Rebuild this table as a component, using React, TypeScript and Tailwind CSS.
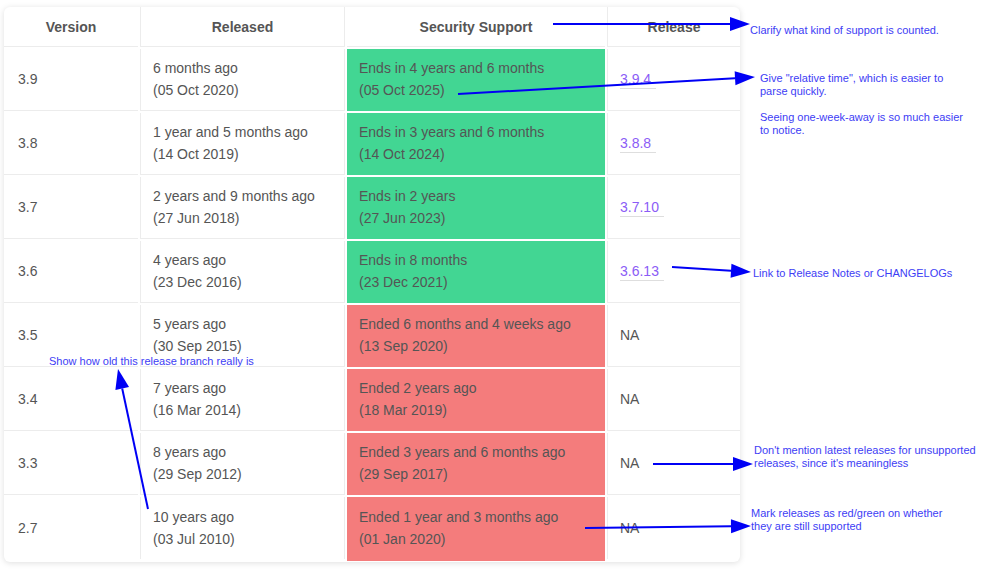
type Row = {
  version: string;
  ago: string;
  date: string;
  support: string;
  supportDate: string;
  ok: boolean;
  release: string | null;
};

const rows: Row[] = [
  { version: "3.9", ago: "6 months ago", date: "(05 Oct 2020)", support: "Ends in 4 years and 6 months", supportDate: "(05 Oct 2025)", ok: true, release: "3.9.4" },
  { version: "3.8", ago: "1 year and 5 months ago", date: "(14 Oct 2019)", support: "Ends in 3 years and 6 months", supportDate: "(14 Oct 2024)", ok: true, release: "3.8.8" },
  { version: "3.7", ago: "2 years and 9 months ago", date: "(27 Jun 2018)", support: "Ends in 2 years", supportDate: "(27 Jun 2023)", ok: true, release: "3.7.10" },
  { version: "3.6", ago: "4 years ago", date: "(23 Dec 2016)", support: "Ends in 8 months", supportDate: "(23 Dec 2021)", ok: true, release: "3.6.13" },
  { version: "3.5", ago: "5 years ago", date: "(30 Sep 2015)", support: "Ended 6 months and 4 weeks ago", supportDate: "(13 Sep 2020)", ok: false, release: null },
  { version: "3.4", ago: "7 years ago", date: "(16 Mar 2014)", support: "Ended 2 years ago", supportDate: "(18 Mar 2019)", ok: false, release: null },
  { version: "3.3", ago: "8 years ago", date: "(29 Sep 2012)", support: "Ended 3 years and 6 months ago", supportDate: "(29 Sep 2017)", ok: false, release: null },
  { version: "2.7", ago: "10 years ago", date: "(03 Jul 2010)", support: "Ended 1 year and 3 months ago", supportDate: "(01 Jan 2020)", ok: false, release: null },
];

// arrows drawn over the screenshot: [x1, y1, x2, y2]
const arrows: [number, number, number, number][] = [
  [553, 24, 750, 24],
  [458, 94, 755, 77],
  [672, 267, 751, 272],
  [653, 464, 753, 464],
  [585, 528, 751, 526],
  [148, 509, 118, 369],
];

function Arrow({ a }: { a: [number, number, number, number] }) {
  const [x1, y1, x2, y2] = a;
  const len = Math.hypot(x2 - x1, y2 - y1);
  const ux = (x2 - x1) / len;
  const uy = (y2 - y1) / len;
  const hl = 20;
  const hw = 7;
  const bx = x2 - ux * hl;
  const by = y2 - uy * hl;
  const pts = `${x2},${y2} ${bx - uy * hw},${by + ux * hw} ${bx + uy * hw},${by - ux * hw}`;
  return (
    <g>
      <line x1={x1} y1={y1} x2={bx} y2={by} stroke="#0000f5" strokeWidth={2} />
      <polygon points={pts} fill="#0000f5" />
    </g>
  );
}

const Note = ({ className, children }: { className: string; children: React.ReactNode }) => (
  <div className={`absolute text-[11px] leading-[13px] text-[#3d3df5] whitespace-nowrap ${className}`}>{children}</div>
);

export default function App() {
  return (
    <div className="relative w-[995px] h-[578px] bg-white font-['Liberation_Sans',Arial,sans-serif] text-[14px] text-[#555]">
      <div className="pt-[7px] pl-[4px]">
        <div className="w-[736px] rounded-md bg-white pb-[3px] shadow-[0_1px_6px_rgba(0,0,0,0.13)] overflow-hidden">
          <div className="grid grid-cols-[134px_205px_258px_133px] auto-rows-[62px] grid-rows-[40px] gap-[2px]">
            <div className="flex items-center justify-center pt-[2px] font-bold border-b border-[#ececec]">Version</div>
            <div className="flex items-center justify-center pt-[2px] font-bold border-b border-x border-[#ececec]">Released</div>
            <div className="flex items-center justify-center pt-[2px] font-bold border-b border-[#ececec]">Security Support</div>
            <div className="flex items-center justify-center pt-[2px] font-bold border-b border-l border-[#ececec]">Release</div>

            {rows.map((r, i) => {
              const last = i === rows.length - 1;
              const bb = last ? "" : "border-b";
              return [
                <div key={r.version + "v"} className={`flex items-center pl-[14px] border-[#ececec] ${bb}`}>{r.version}</div>,
                <div key={r.version + "r"} className={`flex flex-col justify-center pl-[12px] pb-[1px] leading-[22px] border-x border-[#ececec] ${bb}`}>
                  <span>{r.ago}</span>
                  <span>{r.date}</span>
                </div>,
                <div
                  key={r.version + "s"}
                  className={`flex flex-col justify-center pl-[12px] pb-[2px] leading-[22px] ${r.ok ? "bg-[#42d693]" : "bg-[#f47c7c]"} ${last ? "mb-[-2px]" : ""}`}
                >
                  <span>{r.support}</span>
                  <span>{r.supportDate}</span>
                </div>,
                <div key={r.version + "l"} className={`flex items-center pl-[12px] border-l border-[#ececec] ${bb}`}>
                  {r.release ? (
                    <span className="text-[#8b5cf6] border-b border-[#dedede] pr-[5px] leading-[17px]">{r.release}</span>
                  ) : (
                    <span>NA</span>
                  )}
                </div>,
              ];
            })}
          </div>
        </div>
      </div>

      <Note className="left-[750px] top-[24px]">Clarify what kind of support is counted.</Note>
      <Note className="left-[760px] top-[72px]">
        Give "relative time", which is easier to
        <br />
        parse quickly.
        <br />
        <br />
        Seeing one-week-away is so much easier
        <br />
        to notice.
      </Note>
      <Note className="left-[753px] top-[267px]">Link to Release Notes or CHANGELOGs</Note>
      <Note className="left-[49px] top-[355px]">Show how old this release branch really is</Note>
      <Note className="left-[754px] top-[444px]">
        Don't mention latest releases for unsupported
        <br />
        releases, since it's meaningless
      </Note>
      <Note className="left-[751px] top-[507px]">
        Mark releases as red/green on whether
        <br />
        they are still supported
      </Note>

      <svg className="absolute inset-0 pointer-events-none" width={995} height={578}>
        {arrows.map((a, i) => (
          <Arrow key={i} a={a} />
        ))}
      </svg>
    </div>
  );
}
